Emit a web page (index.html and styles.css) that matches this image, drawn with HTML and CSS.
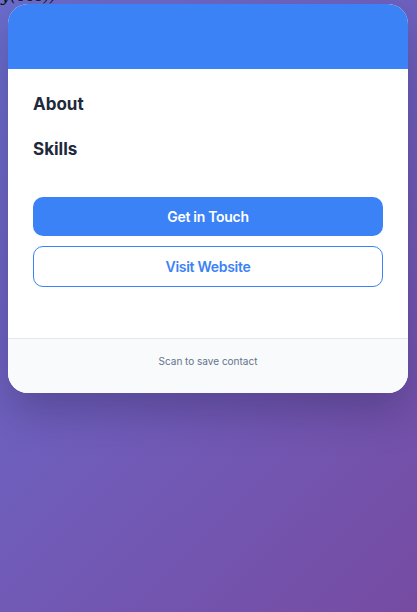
FILE: index.html
```html
<!DOCTYPE html>
<html>
<head>
<meta charset="utf-8">
<link rel="stylesheet" href="styles.css">
</head>
<body>
<div class="stray">ly(ees))</div>
<div class="card">
  <div class="card-header"></div>
  <div class="card-body">
    <h3 class="section-title">About</h3>
    <h3 class="section-title">Skills</h3>
    <div class="actions">
      <a class="btn btn-primary">Get in Touch</a>
      <a class="btn btn-outline">Visit Website</a>
    </div>
  </div>
  <div class="card-footer">Scan to save contact</div>
</div>
</body>
</html>
```
FILE: styles.css
```css
html, body {
  margin: 0;
  padding: 0;
}
body {
  width: 417px;
  height: 612px;
  overflow: hidden;
  background: linear-gradient(135deg, #6a6dcc 0%, #6f5fbd 45%, #764ba2 100%);
  font-family: Inter, "Noto Sans", sans-serif;
}
.stray {
  font-family: "DejaVu Serif", serif;
  font-size: 16px;
  line-height: 16px;
  height: 4px;
  margin-top: -12px;
  margin-left: -4px;
  color: #111;
  font-style: italic;
}
.card {
  margin: 12px 0 0 8px;
  width: 400px;
  background: #fff;
  border-radius: 20px;
  overflow: hidden;
  box-shadow: 0 20px 40px rgba(30, 20, 60, 0.28);
}
.card-header {
  height: 65px;
  background: #3b82f6;
}
.card-body {
  padding: 25px 25px 51px 25px;
}
.section-title {
  margin: 0 0 24px 0;
  font-size: 17px;
  line-height: 21px;
  font-weight: 700;
  color: #1e293b;
}
.actions {
  display: flex;
  flex-direction: column;
  gap: 10px;
  margin-top: 37px;
}
.btn {
  display: block;
  text-align: center;
  font-size: 14px;
  line-height: 17px;
  font-weight: 600;
  letter-spacing: -0.3px;
  padding: 11px 0;
  border-radius: 10px;
}
.btn-primary {
  background: #3b82f6;
  color: #fff;
}
.btn-outline {
  border: 1px solid #3b82f6;
  color: #3b82f6;
  background: #fff;
}
.card-footer {
  border-top: 1px solid #e2e8f0;
  background: #f8fafc;
  text-align: center;
  font-size: 10px;
  line-height: 16px;
  color: #64748b;
  padding: 14px 0 24px 0;
}
```
